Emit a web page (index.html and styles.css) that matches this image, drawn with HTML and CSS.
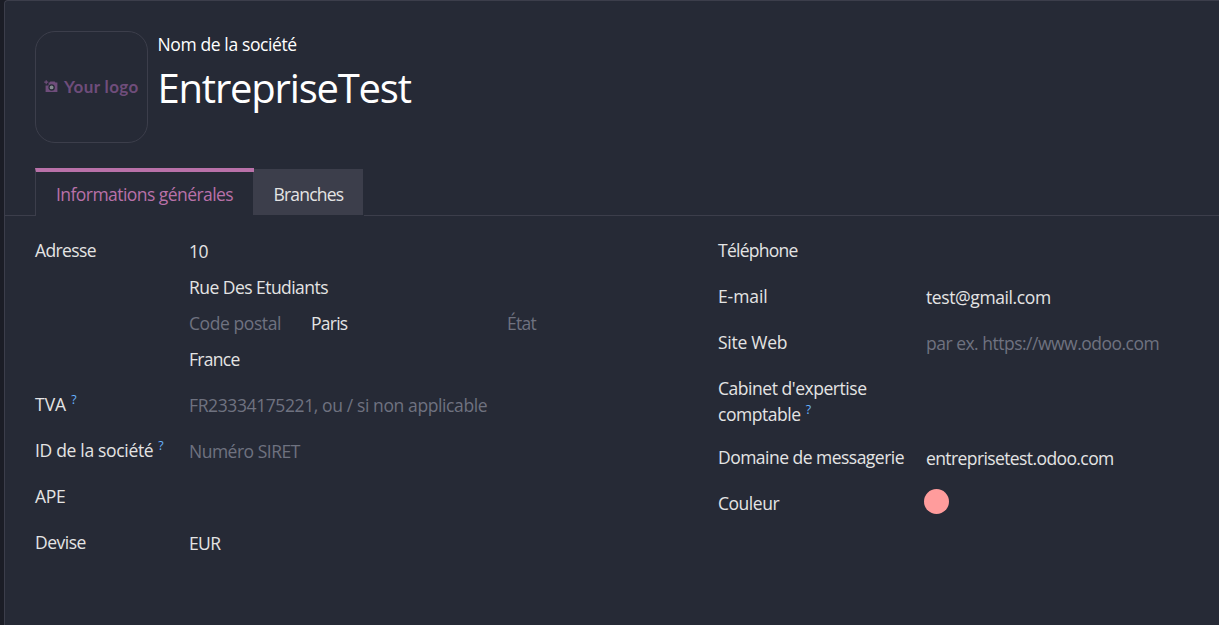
FILE: index.html
```html
<!DOCTYPE html>
<html lang="fr">
<head>
<meta charset="utf-8">
<title>EntrepriseTest</title>
<link rel="stylesheet" href="styles.css">
</head>
<body>
<main class="sheet">
  <header class="head">
    <div class="logo">
      <svg class="logo-icon" viewBox="0 0 14 13" width="14" height="13">
        <path fill="#6f4d7b" d="M4.6 2.6h1L6.4 1.4h4.2l.9 1.2h1.9V12H1.6V5.6h3z"/>
        <path stroke="#6f4d7b" stroke-width="1.2" d="M2.2.2v4M.2 2.2h4"/>
        <circle cx="7.6" cy="7.4" r="2.6" fill="#858b90" stroke="#262a36" stroke-width="1.3"/>
      </svg>
      <span class="logo-text">Your logo</span>
    </div>
    <div class="title">
      <div class="title-label"><span class="t-nom">Nom de la société</span></div>
      <h1 class="company">EntrepriseTest</h1>
    </div>
  </header>

  <nav class="tabs">
    <span class="tab-line tab-line-start"></span>
    <a class="tab tab-active"><span class="t-info">Informations générales</span></a>
    <a class="tab tab-idle"><span class="t-branches">Branches</span></a>
    <span class="tab-line tab-line-end"></span>
  </nav>

  <section class="groups">
    <div class="group group-left">
      <div class="row">
        <div class="label"><span class="t-adresse">Adresse</span></div>
        <div class="address">
          <div><span>10</span></div>
          <div><span class="t-rue">Rue Des Etudiants</span></div>
          <div class="city-line">
            <span class="zip muted"><span class="t-zip">Code postal</span></span>
            <span class="city"><span class="t-paris">Paris</span></span>
            <span class="muted"><span class="t-etat">État</span></span>
          </div>
          <div><span class="t-france">France</span></div>
        </div>
      </div>
      <div class="row">
        <div class="label"><span class="t-tva">TVA</span><sup class="help">?</sup></div>
        <div class="value muted"><span class="t-fr">FR23334175221, ou / si non applicable</span></div>
      </div>
      <div class="row">
        <div class="label"><span class="t-id">ID de la société</span><sup class="help">?</sup></div>
        <div class="value muted"><span class="t-siret">Numéro SIRET</span></div>
      </div>
      <div class="row">
        <div class="label"><span class="t-ape">APE</span></div>
      </div>
      <div class="row">
        <div class="label"><span class="t-devise">Devise</span></div>
        <div class="value"><span class="t-eur">EUR</span></div>
      </div>
    </div>

    <div class="group group-right">
      <div class="row">
        <div class="label"><span class="t-tel">Téléphone</span></div>
      </div>
      <div class="row">
        <div class="label"><span class="t-email">E-mail</span></div>
        <div class="value"><span class="t-gmail">test@gmail.com</span></div>
      </div>
      <div class="row">
        <div class="label"><span class="t-site">Site Web</span></div>
        <div class="value muted"><span class="t-url">par ex. https://www.odoo.com</span></div>
      </div>
      <div class="row">
        <div class="label label-wrap"><span class="t-cabinet">Cabinet d'expertise</span><br><span class="t-comptable">comptable</span><sup class="help">?</sup></div>
      </div>
      <div class="row">
        <div class="label"><span class="t-domaine">Domaine de messagerie</span></div>
        <div class="value"><span class="t-domain">entreprisetest.odoo.com</span></div>
      </div>
      <div class="row">
        <div class="label"><span class="t-couleur">Couleur</span></div>
        <div class="swatch"></div>
      </div>
    </div>
  </section>
</main>
</body>
</html>
```

FILE: styles.css
```css
* { box-sizing: border-box; }

body {
  margin: 0;
  height: 625px;
  padding-left: 4px;
  overflow: hidden;
  background: #1b1d26;
  color: #e4e4e4;
  font: 17.5px/26px "Open Sans", "Noto Sans", sans-serif;
  letter-spacing: -0.5px;
  white-space: nowrap;
}

.sheet {
  height: 640px;
  border: 1px solid #3c3e4b;
  border-right: 0;
  border-top-left-radius: 4px;
  background: #262a36;
}

.head {
  display: flex;
  gap: 10px;
  height: 167px;
  padding: 30px 0 0 30px;
}

.logo {
  display: flex;
  align-items: center;
  gap: 6px;
  width: 113px;
  height: 112px;
  padding: 0 0 0 8px;
  border: 1px solid #3c3e4b;
  border-radius: 20px;
}

.logo-icon { margin-bottom: 2px; }

.logo-text {
  color: #6f4d7b;
  font: 700 17px/20px Lato, sans-serif;
  letter-spacing: 0.4px;
}

.title { margin-left: -0.5px; }
.title-label { color: #fff; line-height: 26px; }

.company {
  margin: 0;
  color: #fff;
  font-size: 40px;
  font-weight: 400;
  line-height: 62px;
  letter-spacing: -1.2px;
}

.tabs { display: flex; height: 48px; }

.tab-line { border-bottom: 1px solid #3c3e4b; }
.tab-line-start { width: 30px; }
.tab-line-end { flex: 1; margin-left: 1px; }

.tab-active {
  z-index: 1;
  width: 219px;
  height: 48px;
  padding-left: 20px;
  border-top: 4px solid #b971a9;
  border-left: 1px solid #3c3e4b;
  color: #b971a9;
  line-height: 44px;
}

.tab-idle {
  width: 110px;
  height: 46px;
  margin: 1px 0 0 -1px;
  padding-left: 20.5px;
  background: #3c3e4b;
  line-height: 50px;
}

.groups {
  display: grid;
  grid-template-columns: 683px 1fr;
  padding: 11px 0 0 30px;
}

.row { display: flex; }
.group-left .label { width: 154px; }
.group-right .label { width: 208px; }

.label { line-height: 46px; height: 46px; }
.value { line-height: 48px; height: 46px; }
.label-wrap { height: 69px; padding-top: 10px; line-height: 26px; }

.address { padding: 6px 0 4px; line-height: 36px; }
.city-line { display: flex; }
.zip { width: 122px; }
.city { width: 196px; }

.muted { color: #6f7280; }

.help {
  margin-left: 5px;
  color: #66b3ff;
  font-size: 12.5px;
  line-height: 0;
  vertical-align: 7px;
}

.swatch {
  width: 25px;
  height: 25px;
  margin: 9px 0 0 -2px;
  border-radius: 50%;
  background: #ff9c9c;
}

/* Tracking per text */
.t-nom { letter-spacing: -0.38px; }
.t-info { letter-spacing: -0.55px; }
.t-branches { letter-spacing: -0.8px; }
.t-adresse { letter-spacing: -0.6px; }
.t-rue { letter-spacing: -0.54px; }
.t-zip { letter-spacing: -0.42px; }
.t-paris { letter-spacing: -0.75px; }
.t-etat { letter-spacing: -0.7px; }
.t-france { letter-spacing: -0.7px; }
.t-tva { letter-spacing: 0; }
.t-fr { letter-spacing: -0.39px; }
.t-id { letter-spacing: -0.32px; }
.t-siret { letter-spacing: -0.5px; }
.t-ape { letter-spacing: -0.3px; }
.t-devise { letter-spacing: -0.5px; }
.t-eur { letter-spacing: -0.6px; }
.t-tel { letter-spacing: -0.73px; }
.t-email { letter-spacing: -0.1px; }
.t-gmail { letter-spacing: -0.4px; }
.t-site { letter-spacing: -0.25px; }
.t-url { letter-spacing: -0.5px; }
.t-cabinet { letter-spacing: -0.46px; }
.t-comptable { letter-spacing: -0.45px; }
.t-domaine { letter-spacing: -0.52px; }
.t-domain { letter-spacing: -0.6px; }
.t-couleur { letter-spacing: -0.48px; }
```
